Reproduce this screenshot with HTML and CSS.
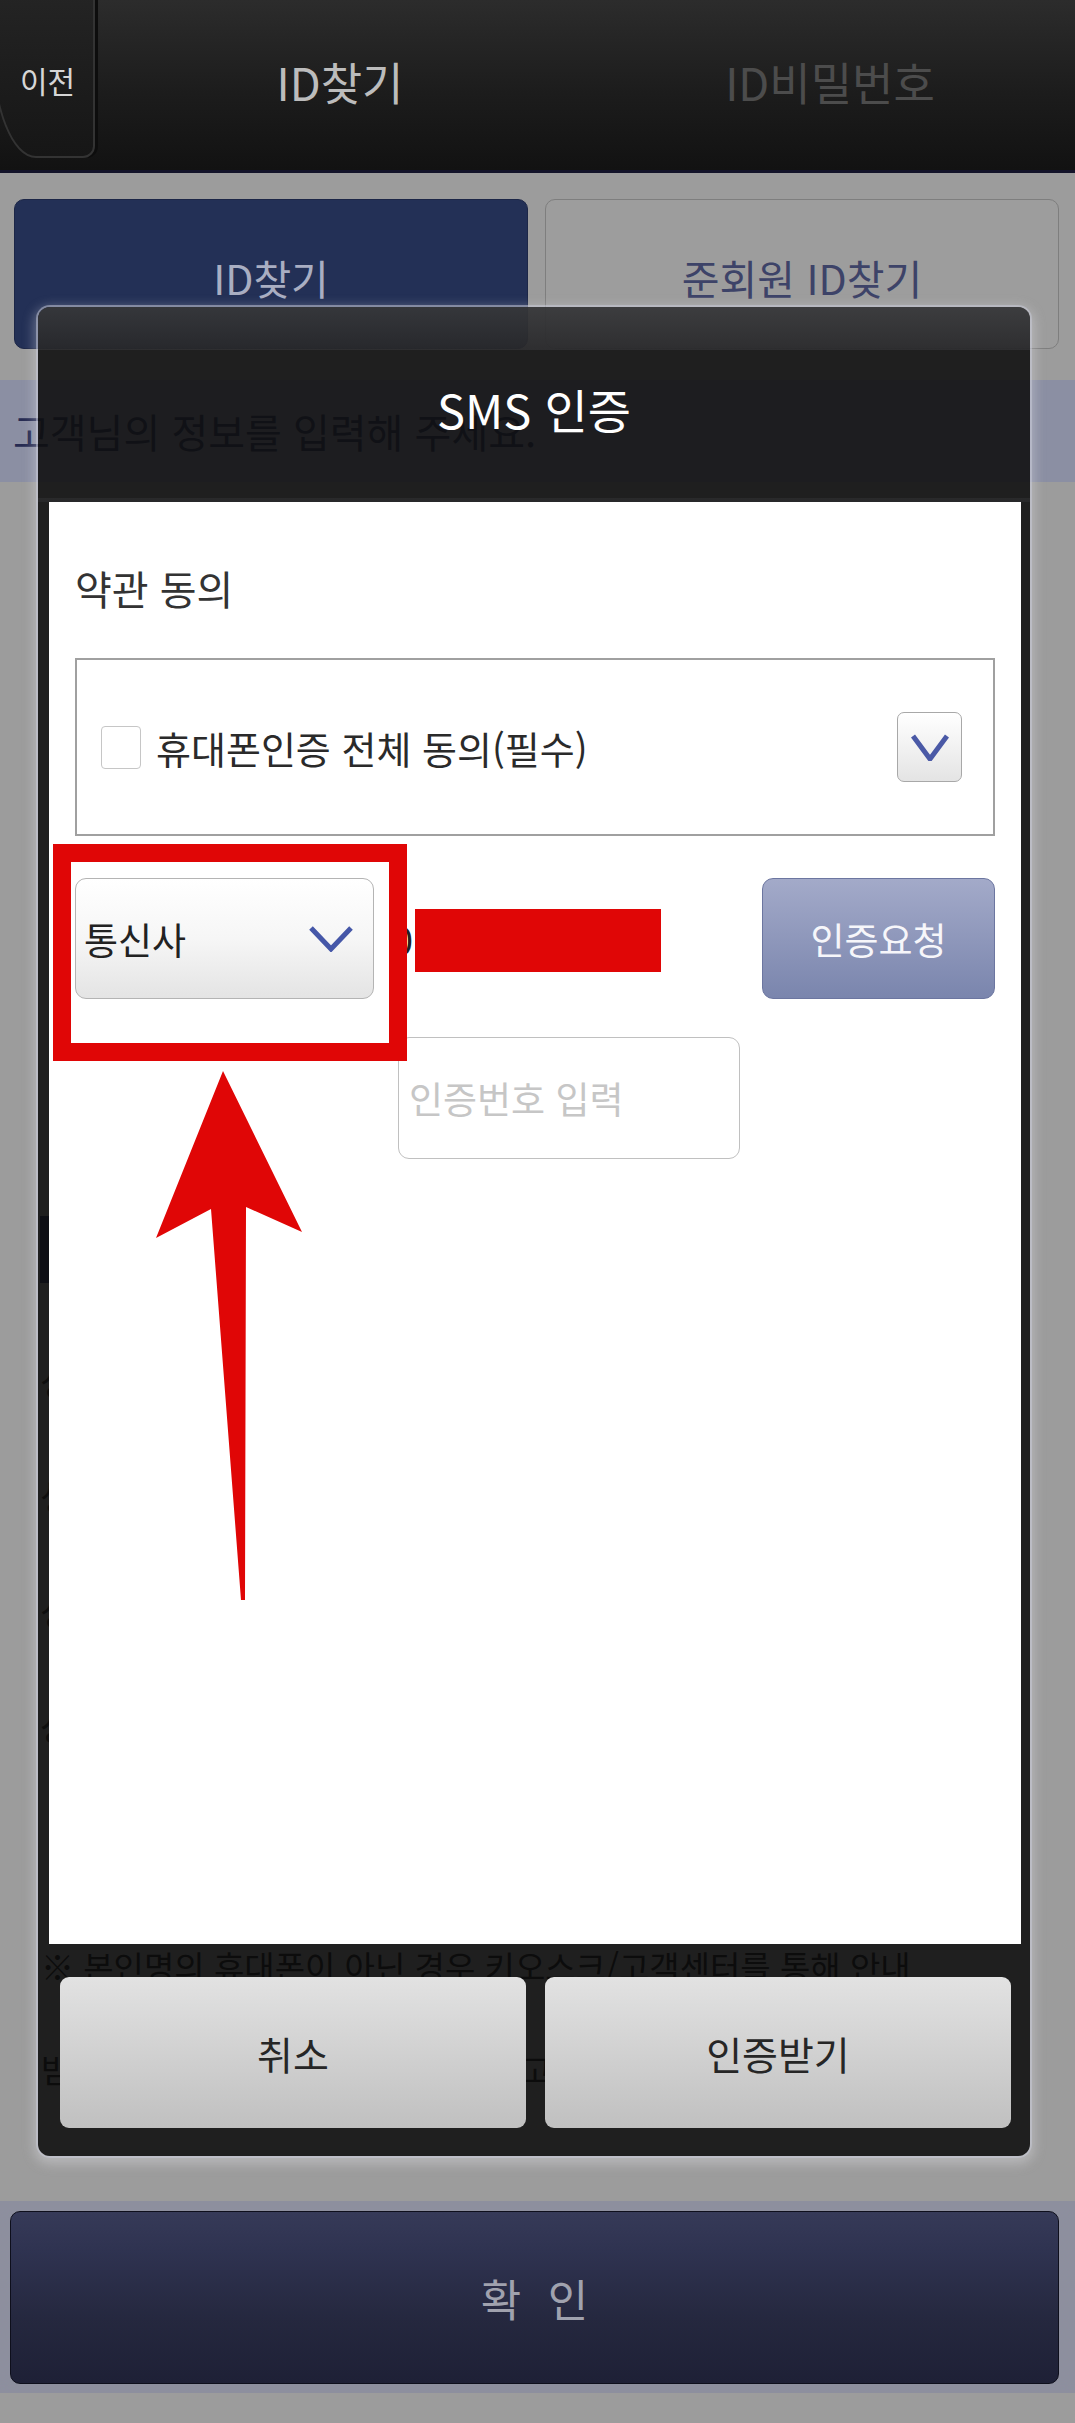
FILE: index.html
```html
<!DOCTYPE html>
<html lang="ko">
<head>
    <meta charset="UTF-8">
    <meta name="viewport" content="width=device-width, initial-scale=1">
    <title>ID찾기</title>
    <link rel="stylesheet" href="styles.css">
</head>
<body>

    <!-- Top Bar -->
    <header class="topbar">
        <div class="back-btn">이전</div>
        <div class="bar-title active">ID찾기</div>
        <div class="bar-title">ID비밀번호</div>
    </header>

    <!-- Page (dimmed under the popup) -->
    <main class="page">
        <div class="tabs">
            <div class="tab tab-on">ID찾기</div>
            <div class="tab">준회원 ID찾기</div>
        </div>
        <div class="notice">고객님의 정보를 입력해 주세요.</div>

        <div class="form-behind">
            <div class="section-bar">본인인증</div>
            <div class="field-line">성명</div>
            <div class="field-line">생년월일</div>
            <div class="field-line">성별</div>
            <div class="field-line">상세정보</div>
        </div>

        <p class="warn">※ 본인명의 휴대폰이 아닌 경우 키오스크/고객센터를 통해 안내</p>
        <p class="warn">받으실 수 있습니다. 자세한 사항은 고객센터로 문의해 주세요.</p>
    </main>

    <footer class="footer">
        <button class="confirm-btn">확 인</button>
    </footer>

    <!-- SMS Popup -->
    <div class="modal">
        <div class="modal-head">SMS 인증</div>

        <div class="modal-body">
            <div class="terms-title">약관 동의</div>

            <div class="agree-box">
                <span class="check"></span>
                <span class="agree-text">휴대폰인증 전체 동의(필수)</span>
                <span class="fold-btn">
                    <svg width="38" height="27" viewBox="0 0 38 27"><polyline points="2,2 19,25 36,2" fill="none" stroke="#4a59a6" stroke-width="5"/></svg>
                </span>
            </div>

            <div class="phone-row">
                <div class="carrier">
                    <span>통신사</span>
                    <svg width="44" height="26" viewBox="0 0 44 26"><polyline points="2,2 22,23 42,2" fill="none" stroke="#4557a8" stroke-width="5"/></svg>
                </div>
                <span class="phone-num">010</span>
                <button class="req-btn">인증요청</button>
            </div>

            <div class="code-row">
                <input class="code-input" type="text" placeholder="인증번호 입력">
            </div>
        </div>

        <div class="modal-actions">
            <button class="act-btn">취소</button>
            <button class="act-btn">인증받기</button>
        </div>
    </div>

    <!-- Red markup drawn over the screenshot -->
    <div class="redact"></div>
    <div class="mark-frame"></div>
    <svg class="mark-arrow" width="160" height="540" viewBox="0 0 160 540">
        <polygon points="73,6 152,167 96,142 95,535 91,535 61,144 6,173" fill="#e00606"/>
    </svg>

</body>
</html>
```

FILE: styles.css
```css
* {
    box-sizing: border-box;
}

body {
    margin: 0;
    width: 1075px;
    height: 2423px;
    position: relative;
    overflow: hidden;
    background-color: #9c9c9c;
    font-family: "Noto Sans CJK KR", "Noto Sans", sans-serif;
}

/* Top bar */
.topbar {
    display: flex;
    height: 173px;
    overflow: hidden;
    background: linear-gradient(to bottom, #2c2c2c 0%, #1c1c1c 55%, #121212 100%);
    border-bottom: 3px solid #13132a;
}

.back-btn {
    flex: 0 0 103px;
    height: 178px;
    margin: -20px 0 0 -8px;
    padding: 22px 0 0 8px;
    display: flex;
    align-items: center;
    justify-content: center;
    border: 2px solid #333;
    border-radius: 0 0 12px 44px / 0 0 12px 110px;
    background: linear-gradient(to bottom, #252525, #161616);
    box-shadow: 3px 0 0 #0d0d0d;
    color: #d6d6d6;
    font-size: 30px;
}

.bar-title {
    flex: 1;
    display: flex;
    align-items: center;
    justify-content: center;
    padding-bottom: 8px;
    font-size: 45px;
    color: #4c4c4c;
}

.bar-title.active {
    color: #bcbcbc;
}

/* Page */
.page {
    height: 2028px;
    overflow: hidden;
}

.tabs {
    display: flex;
    gap: 17px;
    margin: 26px 16px 0 14px;
}

.tab {
    flex: 1;
    height: 150px;
    display: flex;
    align-items: center;
    justify-content: center;
    padding-top: 6px;
    border: 1px solid #7e7e7e;
    border-radius: 10px;
    background-color: #9d9d9d;
    color: #3d4368;
    font-size: 41px;
}

.tab-on {
    background-color: #233056;
    border-color: #1c2647;
    color: #a9aec2;
}

.notice {
    margin-top: 31px;
    height: 102px;
    padding-left: 13px;
    display: flex;
    align-items: center;
    background-color: #8b8fa3;
    color: #262b52;
    font-size: 40px;
}

.form-behind {
    margin-top: 734px;
}

.section-bar {
    width: 460px;
    height: 67px;
    margin-left: 40px;
    padding-left: 20px;
    background-color: #141a48;
    color: #8b8fa3;
    font-size: 34px;
    line-height: 67px;
}

.section-bar + .field-line {
    margin-top: 40px;
}

.field-line {
    height: 115px;
    padding-left: 40px;
    line-height: 115px;
    font-size: 36px;
    color: #111;
}

.warn {
    margin: 0;
    padding-left: 41px;
    white-space: nowrap;
    font-size: 33px;
    line-height: 103px;
    color: #000;
}

.form-behind + .warn {
    margin-top: 132px;
}

/* Bottom confirm */
.footer {
    height: 192px;
    padding: 10px 16px 9px 10px;
    background-color: #8d8f9e;
}

.confirm-btn {
    width: 100%;
    height: 100%;
    padding: 0 0 0 7px;
    border: 1px solid #0e0f1c;
    border-radius: 10px;
    background: linear-gradient(to bottom, #363a58 0%, #2f3351 22%, #25283f 62%, #1e2036 100%);
    color: #a0a2ae;
    font-family: inherit;
    font-size: 44px;
    letter-spacing: 7px;
}

/* SMS popup */
.modal {
    position: absolute;
    left: 38px;
    top: 307px;
    width: 992px;
    height: 1849px;
    display: flex;
    flex-direction: column;
    border-radius: 12px;
    background-color: rgba(14, 14, 14, 0.88);
    box-shadow: 0 0 0 2px rgba(200, 202, 215, 0.5), 0 4px 12px 4px rgba(235, 235, 240, 0.35);
}

.modal-head {
    height: 195px;
    display: flex;
    align-items: center;
    justify-content: center;
    padding-top: 12px;
    border-radius: 12px 12px 0 0;
    border-bottom: 4px solid rgba(0, 0, 0, 0.3);
    background: linear-gradient(to bottom, rgba(90, 91, 95, 0.5) 0, rgba(62, 62, 66, 0.5) 43px, transparent 43px);
    color: #fff;
    font-size: 47px;
}

.modal-body {
    height: 1442px;
    margin: 0 9px 0 11px;
    padding: 60px 26px 0;
    background-color: #fff;
}

.terms-title {
    font-size: 40px;
    line-height: 52px;
    color: #333;
}

.agree-box {
    margin-top: 44px;
    height: 178px;
    display: flex;
    align-items: center;
    padding: 0 31px 0 24px;
    border: 2px solid #a0a0a0;
}

.check {
    width: 40px;
    height: 43px;
    border: 1.5px solid #c6c6c6;
    border-radius: 4px;
}

.agree-text {
    margin-left: 15px;
    font-size: 38px;
    color: #2a2a2a;
}

.fold-btn {
    margin-left: auto;
    width: 65px;
    height: 70px;
    display: flex;
    align-items: center;
    justify-content: center;
    border: 1.5px solid #a8a8a8;
    border-radius: 7px;
    background: linear-gradient(to bottom, #fff, #e4e4e4);
}

.phone-row {
    margin-top: 42px;
    height: 121px;
    display: flex;
    align-items: center;
}

.carrier {
    width: 299px;
    height: 121px;
    display: flex;
    align-items: center;
    padding: 0 20px 0 8px;
    border: 1.5px solid #b4b4b4;
    border-radius: 11px;
    background: linear-gradient(to bottom, #fff 0%, #f6f6f6 50%, #e4e4e4 100%);
    font-size: 37px;
    color: #222;
}

.carrier svg {
    margin-left: auto;
}

.phone-num {
    margin-left: 18px;
    font-size: 38px;
    color: #222;
}

.req-btn {
    margin-left: auto;
    width: 233px;
    height: 121px;
    border: 1px solid #6c76a0;
    border-radius: 11px;
    background: linear-gradient(to bottom, #a3aac9, #7a85ad);
    color: #f6f6fa;
    font-family: inherit;
    font-size: 37px;
}

.code-row {
    margin-top: 38px;
    padding-left: 323px;
}

.code-input {
    width: 342px;
    height: 122px;
    padding-left: 10px;
    border: 1.5px solid #c0c0c0;
    border-radius: 11px;
    font-family: inherit;
    font-size: 37px;
    outline: none;
}

.code-input::placeholder {
    color: #c6c6c6;
}

.modal-actions {
    flex: 1;
    display: flex;
    gap: 19px;
    padding: 33px 19px 28px 22px;
}

.act-btn {
    flex: 1;
    border: none;
    border-radius: 9px;
    background: linear-gradient(to bottom, #e2e2e2, #c0c0c0);
    color: #262626;
    font-family: inherit;
    font-size: 39px;
}

/* Red markup */
.redact {
    position: absolute;
    left: 415px;
    top: 909px;
    width: 246px;
    height: 63px;
    background-color: #e00606;
}

.mark-frame {
    position: absolute;
    left: 53px;
    top: 844px;
    width: 354px;
    height: 217px;
    border: 18px solid #e00606;
}

.mark-arrow {
    position: absolute;
    left: 150px;
    top: 1065px;
}
```
